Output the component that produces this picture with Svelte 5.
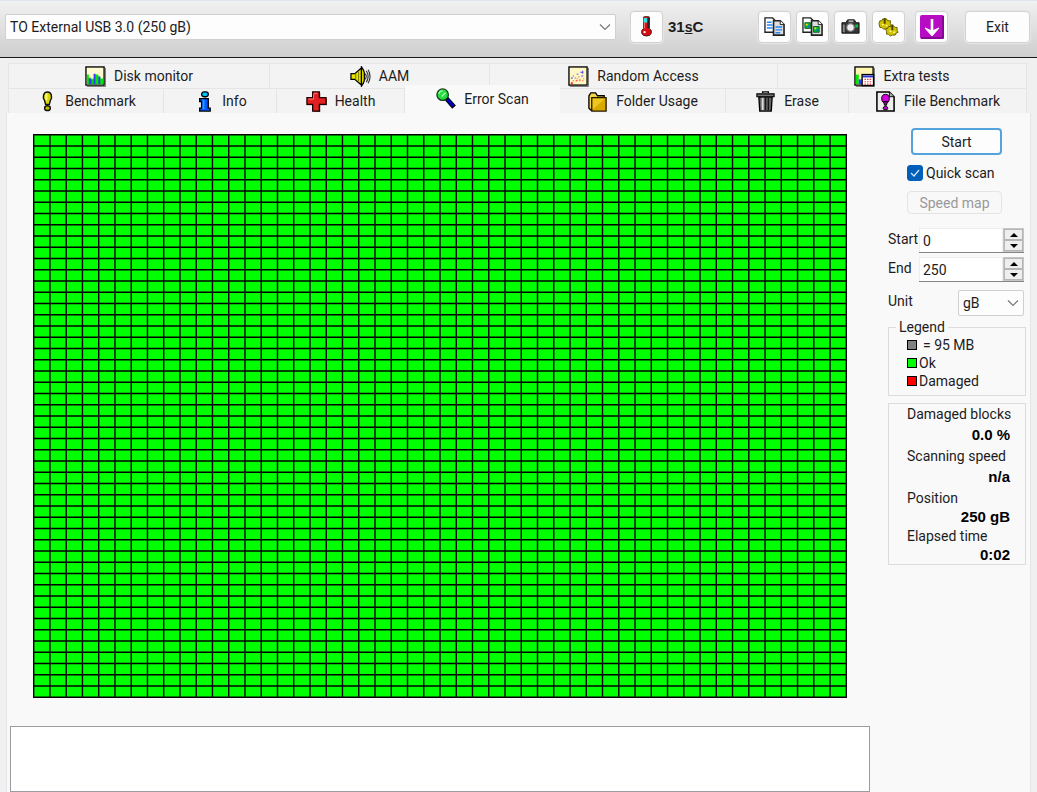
<script lang="ts">
	interface Tab {
		id: string;
		label: string;
	}

	const upperTabs: Tab[] = [
		{ id: 'monitor', label: 'Disk monitor' },
		{ id: 'aam', label: 'AAM' },
		{ id: 'random', label: 'Random Access' },
		{ id: 'extra', label: 'Extra tests' }
	];

	const lowerTabs: Tab[] = [
		{ id: 'benchmark', label: 'Benchmark' },
		{ id: 'info', label: 'Info' },
		{ id: 'health', label: 'Health' },
		{ id: 'scan', label: 'Error Scan' },
		{ id: 'folder', label: 'Folder Usage' },
		{ id: 'erase', label: 'Erase' },
		{ id: 'file', label: 'File Benchmark' }
	];

	const tools = [
		{ id: 'copy-text', label: 'Copy text' },
		{ id: 'copy-image', label: 'Copy screenshot' },
		{ id: 'camera', label: 'Save screenshot' },
		{ id: 'options', label: 'Options' },
		{ id: 'minimize', label: 'Minimize' }
	];

	const stats = [
		{ label: 'Damaged blocks', value: '0.0 %', tight: false },
		{ label: 'Scanning speed', value: 'n/a', tight: false },
		{ label: 'Position', value: '250 gB', tight: true },
		{ label: 'Elapsed time', value: '0:02', tight: true }
	];

	// block map, 50 x 50
	const BLOCKS = 50;
	const MAP_W = 814;
	const MAP_H = 564;
	const marks = Array.from({ length: BLOCKS + 1 }, (_, i) => i);
	const colX = (i: number) => (i * (MAP_W - 1.4)) / BLOCKS + 0.7;
	const rowY = (i: number) => (i * (MAP_H - 1.4)) / BLOCKS + 0.7;

	let active = $state('scan');
	let quickScan = $state(true);
	let start = $state(0);
	let end = $state(250);
</script>

{#snippet chevron()}
	<svg class="chevron" width="12" height="8" viewBox="0 0 12 8" aria-hidden="true">
		<path d="M1 1.5 L6 6.5 L11 1.5" fill="none" stroke="#777" stroke-width="1.2" />
	</svg>
{/snippet}

{#snippet icon(id: string)}
	<svg class="icon" width="21" height="21" viewBox="0 0 22 22" aria-hidden="true">
		{#if id === 'monitor'}
			<path d="M2 21.5H21.5V2" fill="none" stroke="#777" />
			<rect x="1" y="1" width="19" height="19" fill="#fffad0" stroke="#000" stroke-width="1.4" />
			<path d="M2 9h2v3h2v2h2v-1h2v-4h4v2h2v2h3v6H2z" fill="#00e800" />
			<path d="M4 13h3v6H4zM9 8h2v11H9zM14 11h2v8h-2z" fill="#3838ff" />
		{:else if id === 'aam'}
			<path d="M1 8h4l7-6v18l-7-6H1z" fill="#e8e400" stroke="#000" stroke-width="1.3" />
			<path d="M6 8v6M9 6v10" stroke="#746f00" />
			<path d="M12 1l2 3 1 3v8l-1 3-2 3z" fill="#e8e400" stroke="#000" stroke-width="1.3" />
			<path d="M16 8q2 3 0 6M17 5q4 6 0 12M19 4q4 7 0 14" fill="none" stroke="#333" stroke-width="1.2" />
		{:else if id === 'random'}
			<path d="M2 21.5H21.5V2" fill="none" stroke="#777" />
			<rect x="1" y="1" width="19" height="19" fill="#fff8c4" stroke="#000" stroke-width="1.4" />
			<path d="M3 12h2v1H3zM5 10h1v1H5zM9 8h2v1H9zM13 6h2v1h-2zM15 5h1v3h-1zM7 12h1v1H7zM14 10h2v1h-2z" fill="#3838ff" />
			<path d="M3 17h2v2H3zM5 15h1v1H5zM8 15h2v1H8zM9 13h1v1H9zM12 14h1v2h-1zM15 15h1v1h-1zM11 11h1v1h-1zM16 13h1v1h-1z" fill="#f22" />
		{:else if id === 'extra'}
			<path d="M2 21.5H21.5V2" fill="none" stroke="#777" />
			<rect x="1" y="1" width="19" height="19" fill="#fff5b0" stroke="#000" stroke-width="1.4" />
			<path d="M2 9h3v10H2z" fill="#00e800" />
			<path d="M5 14h3v5H5z" fill="#3838ff" />
			<rect x="8.5" y="9" width="12" height="11.5" fill="#fff" stroke="#000" stroke-width="1.5" />
			<path d="M9 10h11v2H9z" fill="#33c" />
			<path d="M11 14h8M11 16.5h8M11 19h8" stroke="#e33" stroke-width="1.3" stroke-dasharray="1.5 1.2" />
		{:else if id === 'benchmark'}
			<path d="M8 4q1-3 4-3t4 3q1 3-1 6l-1 4h-4l-1-4Q7 7 8 4z" fill="#d9d500" stroke="#111" stroke-width="1.5" />
			<path d="M10 3q2-2 2 0v5l-1 3Q9 8 10 3z" fill="#ffff75" />
			<ellipse cx="12" cy="18" rx="3" ry="2.5" fill="#c4bd00" stroke="#111" stroke-width="1.5" />
		{:else if id === 'info'}
			<rect x="9" y="1" width="7" height="5" rx="2.5" fill="#00c4ff" stroke="#000" stroke-width="1.4" />
			<path d="M7 8h9v10h2v3H7v-3h2v-7H7z" fill="#0058ff" stroke="#000" stroke-width="1.4" />
			<path d="M11 9v10" stroke="#20a0ff" stroke-width="2" />
		{:else if id === 'health'}
			<path d="M8 2h7v6h7v7h-7v7H8v-7H1V8h7z" fill="#777" />
			<path d="M7 1h7v6h7v7h-7v7H7v-7H1V7h6z" fill="#e32020" stroke="#200" stroke-width="1.4" />
			<path d="M8 2.5h4M2.5 8.5H8V3" fill="none" stroke="#ff7777" />
		{:else if id === 'scan'}
			<path d="M12 11l8 9" stroke="#000" stroke-width="5" />
			<path d="M13 12l6 7" stroke="#0000c8" stroke-width="3" />
			<circle cx="8" cy="7" r="6" fill="#27dc42" stroke="#173a1c" stroke-width="1.4" />
			<path d="M4 6q1-3 4-3M7 9l4-4" fill="none" stroke="#a4ffad" stroke-width="1.4" />
		{:else if id === 'folder'}
			<path d="M2 5l2-3h5l2 3h7v15H4l-2-2z" fill="#f4d64e" stroke="#000" stroke-width="1.4" />
			<path d="M5 7h15v14H5z" fill="#d9a900" stroke="#211900" stroke-width="1.4" />
			<path d="M6 8h13L6 19z" fill="#edc622" />
		{:else if id === 'erase'}
			<path d="M4 6h14l-1 15H5z" fill="#666" stroke="#000" stroke-width="1.4" />
			<path d="M8 7v13" stroke="#ddd" stroke-width="2" />
			<path d="M11 7v13M14 7v13" stroke="#151515" stroke-width="1.4" />
			<path d="M2 3h18v3H2z" fill="#777" stroke="#000" stroke-width="1.2" />
			<path d="M8 2V1h6v1" fill="none" stroke="#000" stroke-width="1.4" />
		{:else if id === 'file'}
			<path d="M2 1h13l5 5v15H2z" fill="#eee" stroke="#000" stroke-width="1.6" />
			<path d="M15 1v5h5" fill="#aaa" stroke="#000" />
			<ellipse cx="11" cy="8" rx="4" ry="4.5" fill="#d400e0" stroke="#000" />
			<path d="M9 11h4l-1 4h-2z" fill="#96009e" stroke="#000" />
			<ellipse cx="11" cy="18" rx="2.5" ry="1.8" fill="#c700cf" stroke="#000" />
		{:else if id === 'temperature'}
			<path d="M8 1q3-1 6 0v12q3 2 2 5-1 3-5 3t-5-3q-1-3 2-5z" fill="#d90b12" stroke="#422" />
			<path d="M8 2h4v5H8z" fill="#35dfe4" />
			<path d="M9 7v6" stroke="#ff7a7a" />
			<path d="M13 2v11" stroke="#222" stroke-width="2" />
			<circle cx="9" cy="17" r="1.2" fill="#fff" />
		{:else if id === 'copy-text' || id === 'copy-image'}
			<path d="M1 2h8l3 3v12H1z" fill="#fff" stroke="#222" stroke-width="1.4" />
			<path d="M10 5h7l4 4v11H10z" fill="#ddd" stroke="#222" stroke-width="1.7" />
			<path d="M17 5v4h4" fill="#fff" stroke="#222" />
			{#if id === 'copy-text'}
				<path d="M3 6.5h5M3 9.5h6M3 12.5h6M12 11.5h7M12 14.5h7M12 17.5h5" stroke="#2488f4" stroke-width="1.5" />
			{:else}
				<path d="M3 7h6v6H3zM12 11h6v6h-6z" fill="#00b92d" stroke="#145c29" />
				<path d="M4 8h2v2H4zM13 12h2v2h-2z" fill="#ffde00" />
				<path d="M6 10h2v2H6zM15 14h2v2h-2z" fill="#176ee5" />
			{/if}
		{:else if id === 'camera'}
			<path d="M2 7h4l2-3h7l2 3h3v11H2z" fill="#353535" stroke="#151515" />
			<path d="M9 4.5h5v2H9z" fill="#aaa" />
			<circle cx="11" cy="12" r="4" fill="#eee" stroke="#777" stroke-width="1.3" />
			<path d="M16 9h3v3h-3z" fill="#00c83a" />
			<path d="M4 9v8" stroke="#888" stroke-width="2" />
		{:else if id === 'options'}
			<g fill="#d2c400" stroke="#665d00">
				<path d="M1 8l1-3 2 0 1-2 2 1 2-1 1 2 3 0 0 3 1 2-2 1-1 2-3 0-2 1-2-2-2 0z" />
				<path d="M8 14l2-1 1-2 3 0 2-1 2 2 2 0 0 3 1 2-2 1-1 2-3 0-2 1-2-2-2 0 0-3z" />
			</g>
			<path d="M7 2v6M15 9v6" stroke="#4a4300" stroke-width="2" />
			<path d="M4 9h2M8 10h2M12 16h2M16 17h2" stroke="#fff79a" stroke-width="1.4" />
		{/if}
	</svg>
{/snippet}

{#snippet tabRow(tabs: Tab[], row: string)}
	<div class="tab-row {row}" role="tablist">
		{#each tabs as tab}
			<button
				class="tab"
				class:active={active === tab.id}
				role="tab"
				aria-selected={active === tab.id}
				onclick={() => (active = tab.id)}
			>
				{@render icon(tab.id)}
				<span>{tab.label}</span>
			</button>
		{/each}
	</div>
{/snippet}

{#snippet spinButtons(name: string, step: (by: number) => void)}
	<span class="spin-buttons">
		<button aria-label="Increase {name}" onclick={() => step(1)}>
			<svg width="8" height="4" viewBox="0 0 8 4"><path d="M0 4h8L4 0z" /></svg>
		</button>
		<button aria-label="Decrease {name}" onclick={() => step(-1)}>
			<svg width="8" height="4" viewBox="0 0 8 4"><path d="M0 0h8L4 4z" /></svg>
		</button>
	</span>
{/snippet}

<div class="window">
	<header class="toolbar">
		<div class="select drive">
			<select aria-label="Drive">
				<option>TO External USB 3.0 (250 gB)</option>
			</select>
			{@render chevron()}
		</div>
		<button class="tool" aria-label="Temperature">{@render icon('temperature')}</button>
		<div class="temperature">31<span class="degree">s</span>C</div>
		<div class="tools">
			{#each tools as tool}
				<button class="tool {tool.id}" aria-label={tool.label}>
					{#if tool.id === 'minimize'}
						<svg width="26" height="26" viewBox="0 0 26 26" aria-hidden="true">
							<rect x="1" y="1" width="24" height="24" rx="2" fill="#b70bc4" />
							<path d="M2 24h22V2" fill="none" stroke="#77077f" stroke-width="1.5" />
							<path d="M13 5v14" stroke="#fff" stroke-width="2.6" />
							<path d="M6 14l7 3 7-3-7 8z" fill="#fff" stroke="#fff" />
						</svg>
					{:else}
						{@render icon(tool.id)}
					{/if}
				</button>
			{/each}
		</div>
		<button class="tool exit">Exit</button>
	</header>

	<nav class="tabs">
		{@render tabRow(upperTabs, 'upper')}
		{@render tabRow(lowerTabs, 'lower')}
	</nav>

	<main class="panel">
		<section class="scan">
			<svg class="map" viewBox="0 0 {MAP_W} {MAP_H}" role="img" aria-label="Block map">
				<rect width={MAP_W} height={MAP_H} fill="#00ff00" />
				<g stroke="#000" stroke-width="1.4">
					{#each marks as i}
						<line x1={colX(i)} x2={colX(i)} y1="0" y2={MAP_H} />
						<line x1="0" x2={MAP_W} y1={rowY(i)} y2={rowY(i)} />
					{/each}
				</g>
			</svg>
			<textarea class="log" aria-label="Log" readonly></textarea>
		</section>

		<aside class="sidebar">
			<div class="actions">
				<button class="start">Start</button>
				<label class="quick">
					<input type="checkbox" bind:checked={quickScan} />
					<svg class="tick" width="16" height="16" viewBox="0 0 16 16" aria-hidden="true">
						<path d="M4 8l3 3 5-6" fill="none" stroke="#d7e9ff" stroke-width="1.2" />
					</svg>
					Quick scan
				</label>
				<button class="speed" disabled>Speed map</button>
			</div>

			<div class="range">
				<div class="field">
					<label for="start">Start</label>
					<div class="spin">
						<input id="start" type="text" bind:value={start} />
						{@render spinButtons('start', (by) => (start = Number(start) + by))}
					</div>
				</div>
				<div class="field">
					<label for="end">End</label>
					<div class="spin">
						<input id="end" type="text" bind:value={end} />
						{@render spinButtons('end', (by) => (end = Number(end) + by))}
					</div>
				</div>
				<div class="field unit">
					<label for="unit">Unit</label>
					<div class="select">
						<select id="unit">
							<option>gB</option>
							<option>%</option>
						</select>
						{@render chevron()}
					</div>
				</div>
			</div>

			<fieldset class="legend">
				<legend>Legend</legend>
				<div class="key size"><span class="swatch block"></span>= 95 MB</div>
				<div class="key"><span class="swatch ok"></span>Ok</div>
				<div class="key"><span class="swatch damaged"></span>Damaged</div>
			</fieldset>

			<dl class="stats">
				{#each stats as stat}
					<dt>{stat.label}</dt>
					<dd class:tight={stat.tight}>{stat.value}</dd>
				{/each}
			</dl>
		</aside>
	</main>
</div>

<style>
	:global(body) {
		margin: 0;
		background: #f0f0f0;
	}

	.window {
		display: flex;
		flex-direction: column;
		min-height: 100vh;
		box-sizing: border-box;
		font-family: Roboto, 'Liberation Sans', sans-serif;
		font-size: 14px;
		line-height: 18px;
		color: #1c1c1c;
	}

	button,
	input,
	select,
	textarea {
		box-sizing: border-box;
		margin: 0;
		font: inherit;
		color: inherit;
	}

	svg {
		display: block;
		flex: none;
	}

	/* Toolbar */
	.toolbar {
		display: flex;
		align-items: center;
		height: 58px;
		box-sizing: border-box;
		padding: 0 7px 5px 5px;
		border-top: 1px solid #dfe5ee;
		border-bottom: 1px solid #1a1a1a;
		background: linear-gradient(#f1f1f1, #cecece);
	}

	.select {
		position: relative;
	}

	.select select {
		width: 100%;
		height: 26px;
		padding: 0 24px 0 4px;
		border: 1px solid #d0d0d0;
		border-radius: 2px;
		background: #fdfdfd;
		appearance: none;
	}

	.chevron {
		position: absolute;
		top: 9px;
		right: 5px;
		pointer-events: none;
	}

	.drive {
		flex: 1;
		margin-right: 14px;
	}

	.tool {
		display: flex;
		align-items: center;
		justify-content: center;
		width: 33px;
		height: 32px;
		padding: 0;
		border: 1px solid #d2d2d2;
		border-radius: 4px;
		background: #fdfdfd;
		box-shadow: 0 0 0 1px #e6e6e6;
	}

	.temperature {
		width: 90px;
		padding-left: 5px;
		font: bold 15px/18px 'Liberation Sans', sans-serif;
	}

	.degree {
		font-size: 14px;
		text-decoration: underline;
	}

	.tools {
		display: flex;
		gap: 5px;
	}

	.minimize {
		margin-left: 5px;
	}

	.exit {
		width: 65px;
		margin-left: 17px;
	}

	/* Tabs */
	.tabs {
		padding: 5px 10px 0 8px;
	}

	.tab-row {
		display: grid;
		height: 25px;
	}

	.upper {
		grid-template-columns: 262fr 220fr 288fr 249fr;
	}

	.lower {
		grid-template-columns: 156fr 113fr 128fr 155fr 166fr 123fr 178fr;
	}

	.tab {
		display: flex;
		align-items: center;
		justify-content: center;
		gap: 8px;
		min-width: 0;
		padding: 0;
		border: 0 solid #e5e5e5;
		border-width: 1px 1px 0 0;
		background: #f3f3f3;
		white-space: nowrap;
	}

	.tab:first-child {
		border-left-width: 1px;
	}

	.tab.active {
		z-index: 1;
		margin-top: -3px;
		padding-bottom: 2px;
		border-color: #f9f9f9;
		background: #f9f9f9;
	}

	/* Panel */
	.panel {
		display: flex;
		flex: 1;
		gap: 18px;
		margin: 0 6px;
		padding: 0 4px 0 3px;
		border: 1px solid #e5e5e5;
		border-width: 0 1px 0 1px;
		background: #f9f9f9;
	}

	.scan {
		display: flex;
		flex: 1;
		flex-direction: column;
		gap: 28px;
		padding-top: 21px;
	}

	.map {
		margin: 0 23px;
	}

	.log {
		flex: 1;
		width: 100%;
		min-height: 64px;
		border: 1px solid #999ca0;
		background: #fff;
		resize: none;
	}

	/* Sidebar */
	.sidebar {
		width: 138px;
		padding-top: 15px;
	}

	.actions {
		display: flex;
		flex-direction: column;
		gap: 7px;
		padding: 0 24px 0 19px;
	}

	.start {
		height: 27px;
		margin-left: 4px;
		border: 2px solid #55a3dc;
		border-radius: 4px;
		background: #fdfdfd;
	}

	.quick {
		display: flex;
		align-items: center;
		gap: 3px;
		position: relative;
		height: 22px;
		white-space: nowrap;
	}

	.quick input {
		flex: none;
		width: 16px;
		height: 16px;
		border: 1px solid #888;
		border-radius: 3px;
		background: #fff;
		appearance: none;
	}

	.quick input:checked {
		border-color: #005fb8;
		background: #005fb8;
	}

	.tick {
		position: absolute;
		left: 0;
		pointer-events: none;
	}

	.quick input:not(:checked) + .tick {
		display: none;
	}

	.speed {
		height: 23px;
		border: 1px solid #e4e4e4;
		border-radius: 4px;
		background: #f8f8f8;
		color: #999;
	}

	.range {
		display: flex;
		flex-direction: column;
		gap: 4px;
		padding: 14px 2px 0 0;
	}

	.field {
		display: flex;
		align-items: flex-start;
		justify-content: space-between;
	}

	.field label {
		padding-top: 2px;
	}

	.spin {
		display: flex;
		width: 105px;
		height: 25px;
		box-sizing: border-box;
		border-bottom: 1px solid #858585;
	}

	.spin input {
		flex: 1;
		min-width: 0;
		padding: 0 3px;
		border: 1px solid #eee;
		border-bottom: 0;
		background: #fff;
	}

	.spin-buttons {
		display: flex;
		flex-direction: column;
		width: 21px;
		box-sizing: border-box;
		padding: 1px;
		background: #c6c6c6;
	}

	.spin-buttons button {
		display: flex;
		flex: 1;
		align-items: center;
		justify-content: center;
		padding: 0;
		border: 1px solid #b5b5b5;
		background: #eee;
	}

	.unit {
		margin-top: 4px;
	}

	.unit .select {
		width: 66px;
	}

	.legend {
		margin: 2px 0 0;
		padding: 0 0 5px 18px;
		border: 1px solid #dcdcdc;
	}

	.legend legend {
		margin-left: -11px;
		padding: 0 3px;
	}

	.key {
		display: flex;
		align-items: center;
		gap: 2px;
		height: 18px;
	}

	.key.size {
		gap: 6px;
	}

	.swatch {
		width: 8px;
		height: 8px;
		border: 1px solid #000;
	}

	.swatch.block {
		background: #808080;
	}

	.swatch.ok {
		background: #00ff00;
	}

	.swatch.damaged {
		background: #ff0000;
	}

	.stats {
		margin: 7px 0 0;
		padding: 0 15px 0 18px;
		border: 1px solid #dcdcdc;
	}

	.stats dt {
		line-height: 20px;
		white-space: nowrap;
	}

	.stats dd {
		margin: 0;
		font: bold 15px/22px 'Liberation Sans', sans-serif;
		color: #000;
		text-align: right;
	}

	.stats dd.tight {
		line-height: 18px;
	}
</style>
